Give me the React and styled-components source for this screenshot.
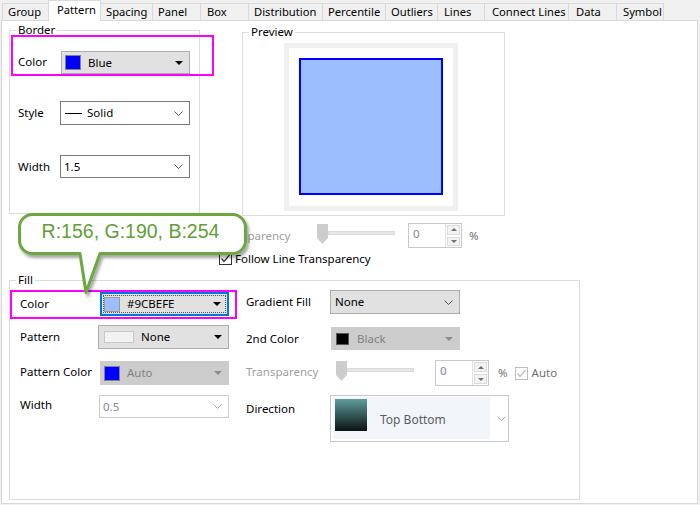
import React from 'react';
import styled, { createGlobalStyle, css } from 'styled-components';

const GlobalStyle = createGlobalStyle`
  * { box-sizing: border-box; }
  html, body { margin: 0; padding: 0; background: #f0f0f0; }
  body {
    font-family: "Noto Sans", "Segoe UI", sans-serif;
    font-size: 11.5px;
    color: #000;
  }
`;

const Dialog = styled.div`
  position: relative;
  width: 700px;
  height: 505px;
  background: #f0f0f0;
  overflow: hidden;
`;

const TabBar = styled.div`
  position: relative;
  z-index: 1;
  display: flex;
  align-items: flex-end;
  height: 20px;
  padding-left: 3px;
`;

const Tab = styled.div`
  width: ${p => p.$w}px;
  height: 17px;
  margin-left: -1px;
  padding-left: ${p => p.$pad || 5}px;
  border: 1px solid #d9d9d9;
  border-bottom: none;
  background: #f0f0f0;
  font-size: 11.2px;
  line-height: 16px;
  white-space: nowrap;
  ${p =>
    p.$active &&
    css`
      height: 21px;
      margin-bottom: -1px;
      background: #fff;
      line-height: 18px;
    `}
`;

const Panel = styled.div`
  width: 697px;
  height: 484px;
  margin-left: 1px;
  background: #fff;
  border: 1px solid #d9d9d9;
`;

const TopSection = styled.div`
  display: flex;
  align-items: flex-start;
`;

const Group = styled.fieldset`
  width: ${p => p.$w}px;
  min-width: 0;
  margin: ${p => p.$mt || 0}px 0 0 ${p => p.$ml || 0}px;
  padding: 0;
  border: 1px solid #dcdcdc;
`;

const Legend = styled.legend`
  margin-left: 6px;
  padding: 0 2px;
  line-height: 16px;
  font-size: 11.5px;
`;

const GroupBody = styled.div`
  display: ${p => (p.$row ? 'flex' : 'flow-root')};
  height: ${p => p.$h}px;
  padding-left: ${p => p.$pl || 0}px;
`;

const FormRow = styled.div`
  position: relative;
  display: flex;
  align-items: center;
  height: ${p => p.$h}px;
  margin-top: ${p => p.$mt || 0}px;
  margin-left: ${p => p.$ml || 0}px;
`;

const Marked = styled(FormRow)`
  &::after {
    content: '';
    position: absolute;
    top: ${p => p.$box[0]}px;
    right: ${p => p.$box[1]}px;
    bottom: ${p => p.$box[2]}px;
    left: ${p => p.$box[3]}px;
    border: 2px solid #ff00ff;
    pointer-events: none;
  }
`;

const Label = styled.span`
  flex: none;
  width: ${p => (p.$w ? `${p.$w}px` : 'auto')};
  margin-bottom: ${p => (p.$lift || 0) * 2}px;
  margin-left: ${p => p.$ml || 0}px;
  color: ${p => p.$color || '#000'};
  line-height: 16px;
  white-space: nowrap;
`;

const comboLooks = {
  list: css`
    background: #e1e1e1;
    border: 1px solid #adadad;
  `,
  focus: css`
    background: #e1e1e1;
    border: 2px solid #0078d7;
    padding-left: 2px;
    outline: 1px dotted #555;
    outline-offset: -4px;
  `,
  edit: css`
    background: #fff;
    border: 1px solid #7a7a7a;
  `,
  off: css`
    background: #cccccc;
    border: 1px solid #cccccc;
    color: #838383;
  `,
  offEdit: css`
    background: #fff;
    border: 1px solid #cccccc;
    color: #8a8a8a;
  `,
};

const Combo = styled.div`
  flex: none;
  display: flex;
  align-items: center;
  width: ${p => p.$w}px;
  height: 100%;
  margin-left: ${p => p.$ml || 0}px;
  padding: 0 6px 0 3px;
  color: #000;
  ${p => comboLooks[p.$look || 'list']}
`;

const Swatch = styled.span`
  flex: none;
  width: ${p => p.$w || 16}px;
  height: ${p => p.$h || 15}px;
  margin-left: ${p => p.$ml || 0}px;
  background: ${p => p.$color};
  border: 1px solid ${p => p.$edge || '#8a8a8a'};
`;

const DashLine = styled.span`
  flex: none;
  width: 17px;
  margin-left: 1px;
  border-top: 1px solid #000;
`;

const ComboText = styled.span`
  margin-left: ${p => p.$ml || 0}px;
  line-height: 16px;
  white-space: nowrap;
`;

const Triangle = styled.span`
  flex: none;
  margin-left: auto;
  width: 0;
  height: 0;
  border-left: 4px solid transparent;
  border-right: 4px solid transparent;
  border-top: 4px solid ${p => p.$color || '#000'};
`;

const ChevronIcon = styled.svg`
  flex: none;
  margin-left: ${p => (p.$ml != null ? `${p.$ml}px` : 'auto')};
`;

const Chevron = ({ color = '#555', ml }) => (
  <ChevronIcon $ml={ml} width="9" height="5" viewBox="0 0 9 5">
    <polyline points="0.5,0.5 4.5,4.5 8.5,0.5" fill="none" stroke={color} strokeWidth="1" />
  </ChevronIcon>
);

const PreviewFrame = styled.div`
  width: 174px;
  height: 168px;
  margin: 3px 0 0 41px;
  padding: 10px;
  background: #fff;
  border: 5px solid #f0f0f0;
`;

const PreviewBox = styled.div`
  width: 144px;
  height: 137px;
  background: #9cbefe;
  border: 2px solid #0000ff;
`;

const MidBlock = styled.div`
  display: flow-root;
  padding-left: 216px;
`;

const SliderWrap = styled.div`
  flex: none;
  display: flex;
  align-items: flex-start;
  align-self: flex-start;
  width: 78px;
  height: 20px;
  margin-top: 1px;
  margin-left: ${p => p.$ml || 0}px;
`;

const SliderTrack = styled.div`
  flex: 1;
  height: 4px;
  margin-top: 7px;
  background: #e7e7e7;
  border: 1px solid #dadada;
`;

const Slider = ({ ml }) => (
  <SliderWrap $ml={ml}>
    <svg width="11" height="20" viewBox="0 0 11 20">
      <path d="M0 0 H11 V14 L5.5 20 L0 14 Z" fill="#cdcdcd" />
    </svg>
    <SliderTrack />
  </SliderWrap>
);

const SpinBox = styled.div`
  flex: none;
  display: flex;
  width: 54px;
  height: 100%;
  margin-left: ${p => p.$ml || 0}px;
  background: #fff;
  border: 1px solid #c8c8c8;
`;

const SpinValue = styled.span`
  flex: 1;
  padding: 2px 0 0 4px;
  color: #7d8796;
  line-height: 16px;
`;

const SpinButtons = styled.div`
  display: flex;
  flex-direction: column;
  width: 16px;
  border-left: 1px solid #e0e0e0;
`;

const SpinButton = styled.div`
  flex: 1;
  display: flex;
  align-items: center;
  justify-content: center;
  margin: 1px;
  background: #f3f3f3;
  border: 1px solid #dadada;
  &::after {
    content: '';
    border-left: 3px solid transparent;
    border-right: 3px solid transparent;
    ${p =>
      p.$down
        ? css`border-top: 3px solid #6f6f6f;`
        : css`border-bottom: 3px solid #6f6f6f;`}
  }
`;

const Spin = ({ ml }) => (
  <SpinBox $ml={ml}>
    <SpinValue>0</SpinValue>
    <SpinButtons>
      <SpinButton />
      <SpinButton $down />
    </SpinButtons>
  </SpinBox>
);

const CheckIcon = styled.svg`
  flex: none;
  margin-left: ${p => p.$ml || 0}px;
`;

const Check = ({ off, ml }) => {
  const c = off ? '#bcbcbc' : '#333';
  return (
    <CheckIcon $ml={ml} width="13" height="13" viewBox="0 0 13 13">
      <rect x="0.5" y="0.5" width="12" height="12" fill="#fff" stroke={c} />
      <polyline points="2.5,6.5 5,9.5 10.5,3" fill="none" stroke={c} strokeWidth="1.2" />
    </CheckIcon>
  );
};

const Column = styled.div`
  flex: none;
  width: ${p => (p.$w ? `${p.$w}px` : 'auto')};
  margin-left: ${p => p.$ml || 0}px;
  padding-left: ${p => p.$pl || 0}px;
`;

const DirectionBox = styled.div`
  flex: none;
  display: flex;
  align-items: flex-start;
  width: 179px;
  height: 100%;
  padding: 1px 0 2px 2px;
  background: #fff;
  border: 1px solid #c8c8c8;
`;

const DirectionFace = styled.div`
  display: flex;
  align-items: center;
  width: 157px;
  height: 100%;
  padding-left: 2px;
  background: #f2f5fa;
`;

const GradientSwatch = styled.span`
  flex: none;
  align-self: flex-start;
  width: 32px;
  height: 32px;
  margin-top: 2px;
  background: linear-gradient(#609c9c, #0b1212);
`;

const DirectionText = styled.span`
  margin-left: 13px;
  margin-top: 3px;
  color: #5c5c5c;
  font-size: 12px;
`;

const DirectionArrow = styled.div`
  display: flex;
  align-items: center;
  height: 100%;
  margin-left: 7px;
`;

const Callout = styled.div`
  position: absolute;
  left: 15px;
  top: 210px;
  z-index: 2;
  width: 240px;
  height: 90px;
  pointer-events: none;
`;

const CalloutText = styled.text`
  font-family: "Liberation Sans", Arial, sans-serif;
  font-size: 19.5px;
  fill: #5fa036;
`;

const TABS = [
  { name: 'Group', w: 47 },
  { name: 'Pattern', w: 53, pad: 8, active: true },
  { name: 'Spacing', w: 53 },
  { name: 'Panel', w: 49 },
  { name: 'Box', w: 49, pad: 6 },
  { name: 'Distribution', w: 75 },
  { name: 'Percentile', w: 64 },
  { name: 'Outliers', w: 53 },
  { name: 'Lines', w: 48, pad: 6 },
  { name: 'Connect Lines', w: 85, pad: 7 },
  { name: 'Data', w: 49, pad: 7 },
  { name: 'Symbol', w: 48, pad: 6 },
];

const BUBBLE =
  'M17.5 4.5 H217.5 A13 13 0 0 1 230.5 17.5 V30.5 A13 13 0 0 1 217.5 43.5 H85 L71 82.5 L65 43.5 H17.5 A13 13 0 0 1 4.5 30.5 V17.5 A13 13 0 0 1 17.5 4.5 Z';

export default function App() {
  return (
    <Dialog>
      <GlobalStyle />
      <TabBar>
        {TABS.map(t => (
          <Tab key={t.name} $w={t.w} $pad={t.pad} $active={t.active}>
            {t.name}
          </Tab>
        ))}
      </TabBar>

      <Panel>
        <TopSection>
          <Group $w={191} $ml={7} $mt={1}>
            <Legend>Border</Legend>
            <GroupBody $h={175} $pl={8}>
              <Marked $h={23} $mt={13} $box={[-16, -15, -2, -7]}>
                <Label $w={43} $lift={1}>Color</Label>
                <Combo $w={129}>
                  <Swatch $color="#0000ff" $edge="#7f7f9f" />
                  <ComboText $ml={7}>Blue</ComboText>
                  <Triangle />
                </Combo>
              </Marked>
              <FormRow $h={24} $mt={27}>
                <Label $w={42}>Style</Label>
                <Combo $w={130} $look="edit">
                  <DashLine />
                  <ComboText $ml={5}>Solid</ComboText>
                  <Chevron />
                </Combo>
              </FormRow>
              <FormRow $h={23} $mt={30}>
                <Label $w={42}>Width</Label>
                <Combo $w={130} $look="edit">
                  <ComboText>1.5</ComboText>
                  <Chevron />
                </Combo>
              </FormRow>
            </GroupBody>
          </Group>

          <Group $w={263} $ml={42} $mt={3}>
            <Legend>Preview</Legend>
            <GroupBody $h={175}>
              <PreviewFrame>
                <PreviewBox />
              </PreviewFrame>
            </GroupBody>
          </Group>
        </TopSection>

        <MidBlock>
          <FormRow $h={25} $mt={7}>
            <Label $w={99} $color="#a0a0a0">Transparency</Label>
            <Slider />
            <Spin ml={13} />
            <Label $ml={7} $color="#707070">%</Label>
          </FormRow>
          <FormRow $h={13} $mt={4} $ml={1}>
            <Check />
            <Label $ml={3}>Follow Line Transparency</Label>
          </FormRow>
        </MidBlock>

        <Group $w={571} $ml={7} $mt={7}>
          <Legend>Fill</Legend>
          <GroupBody $h={211} $row>
            <Column $w={219} $pl={10}>
              <Marked $h={24} $mt={4} $box={[-2, -8, -3, -10]}>
                <Label $w={80}>Color</Label>
                <Combo $w={129} $look="focus">
                  <Swatch $color="#9cbefe" $edge="#9a9a9a" />
                  <ComboText $ml={7}>#9CBEFE</ComboText>
                  <Triangle />
                </Combo>
              </Marked>
              <FormRow $h={24} $mt={9}>
                <Label $w={80}>Pattern</Label>
                <Combo $w={131} $ml={-2} $look="list">
                  <Swatch $w={30} $h={12} $ml={2} $color="#f2f2f2" $edge="#c8c8c8" />
                  <ComboText $ml={7}>None</ComboText>
                  <Triangle />
                </Combo>
              </FormRow>
              <FormRow $h={24} $mt={12}>
                <Label $w={80} $lift={1}>Pattern Color</Label>
                <Combo $w={129} $look="off">
                  <Swatch $color="#0000ff" $edge="#7f7f9f" />
                  <ComboText $ml={7}>Auto</ComboText>
                  <Triangle $color="#8c8c8c" />
                </Combo>
              </FormRow>
              <FormRow $h={23} $mt={10}>
                <Label $w={80} $lift={1.5}>Width</Label>
                <Combo $w={130} $ml={-1} $look="offEdit">
                  <ComboText>0.5</ComboText>
                  <Chevron color="#b0b0b0" />
                </Combo>
              </FormRow>
            </Column>

            <Column $ml={17}>
              <FormRow $h={24} $mt={2}>
                <Label $w={84}>Gradient Fill</Label>
                <Combo $w={130} $look="list">
                  <ComboText $ml={1}>None</ComboText>
                  <Chevron />
                </Combo>
              </FormRow>
              <FormRow $h={23} $mt={13}>
                <Label $w={84}>2nd Color</Label>
                <Combo $w={129} $ml={1} $look="off">
                  <Swatch $w={13} $h={12} $ml={1} $color="#000" $edge="#555" />
                  <ComboText $ml={8}>Black</ComboText>
                  <Triangle $color="#8c8c8c" />
                </Combo>
              </FormRow>
              <FormRow $h={26} $mt={10}>
                <Label $w={84} $lift={1.5} $color="#a0a0a0">Transparency</Label>
                <Slider ml={6} />
                <Spin ml={21} />
                <Label $ml={9} $color="#707070">%</Label>
                <Check off ml={7} />
                <Label $ml={4} $color="#6d6d6d">Auto</Label>
              </FormRow>
              <FormRow $h={47} $mt={9}>
                <Label $w={84} $lift={10}>Direction</Label>
                <DirectionBox>
                  <DirectionFace>
                    <GradientSwatch />
                    <DirectionText>Top Bottom</DirectionText>
                  </DirectionFace>
                  <DirectionArrow>
                    <Chevron color="#a8a8a8" ml={0} />
                  </DirectionArrow>
                </DirectionBox>
              </FormRow>
            </Column>
          </GroupBody>
        </Group>
      </Panel>

      <Callout>
        <svg width="240" height="90" viewBox="0 0 240 90">
          <defs>
            <filter id="bubbleShadow" x="-10%" y="-10%" width="130%" height="140%">
              <feDropShadow dx="2" dy="3" stdDeviation="1.5" floodColor="#000" floodOpacity="0.35" />
            </filter>
          </defs>
          <path d={BUBBLE} fill="#fff" stroke="#6aa83f" strokeWidth="3" strokeLinejoin="round" filter="url(#bubbleShadow)" />
          <CalloutText x="115.5" y="28" textAnchor="middle">
            R:156, G:190, B:254
          </CalloutText>
        </svg>
      </Callout>
    </Dialog>
  );
}
